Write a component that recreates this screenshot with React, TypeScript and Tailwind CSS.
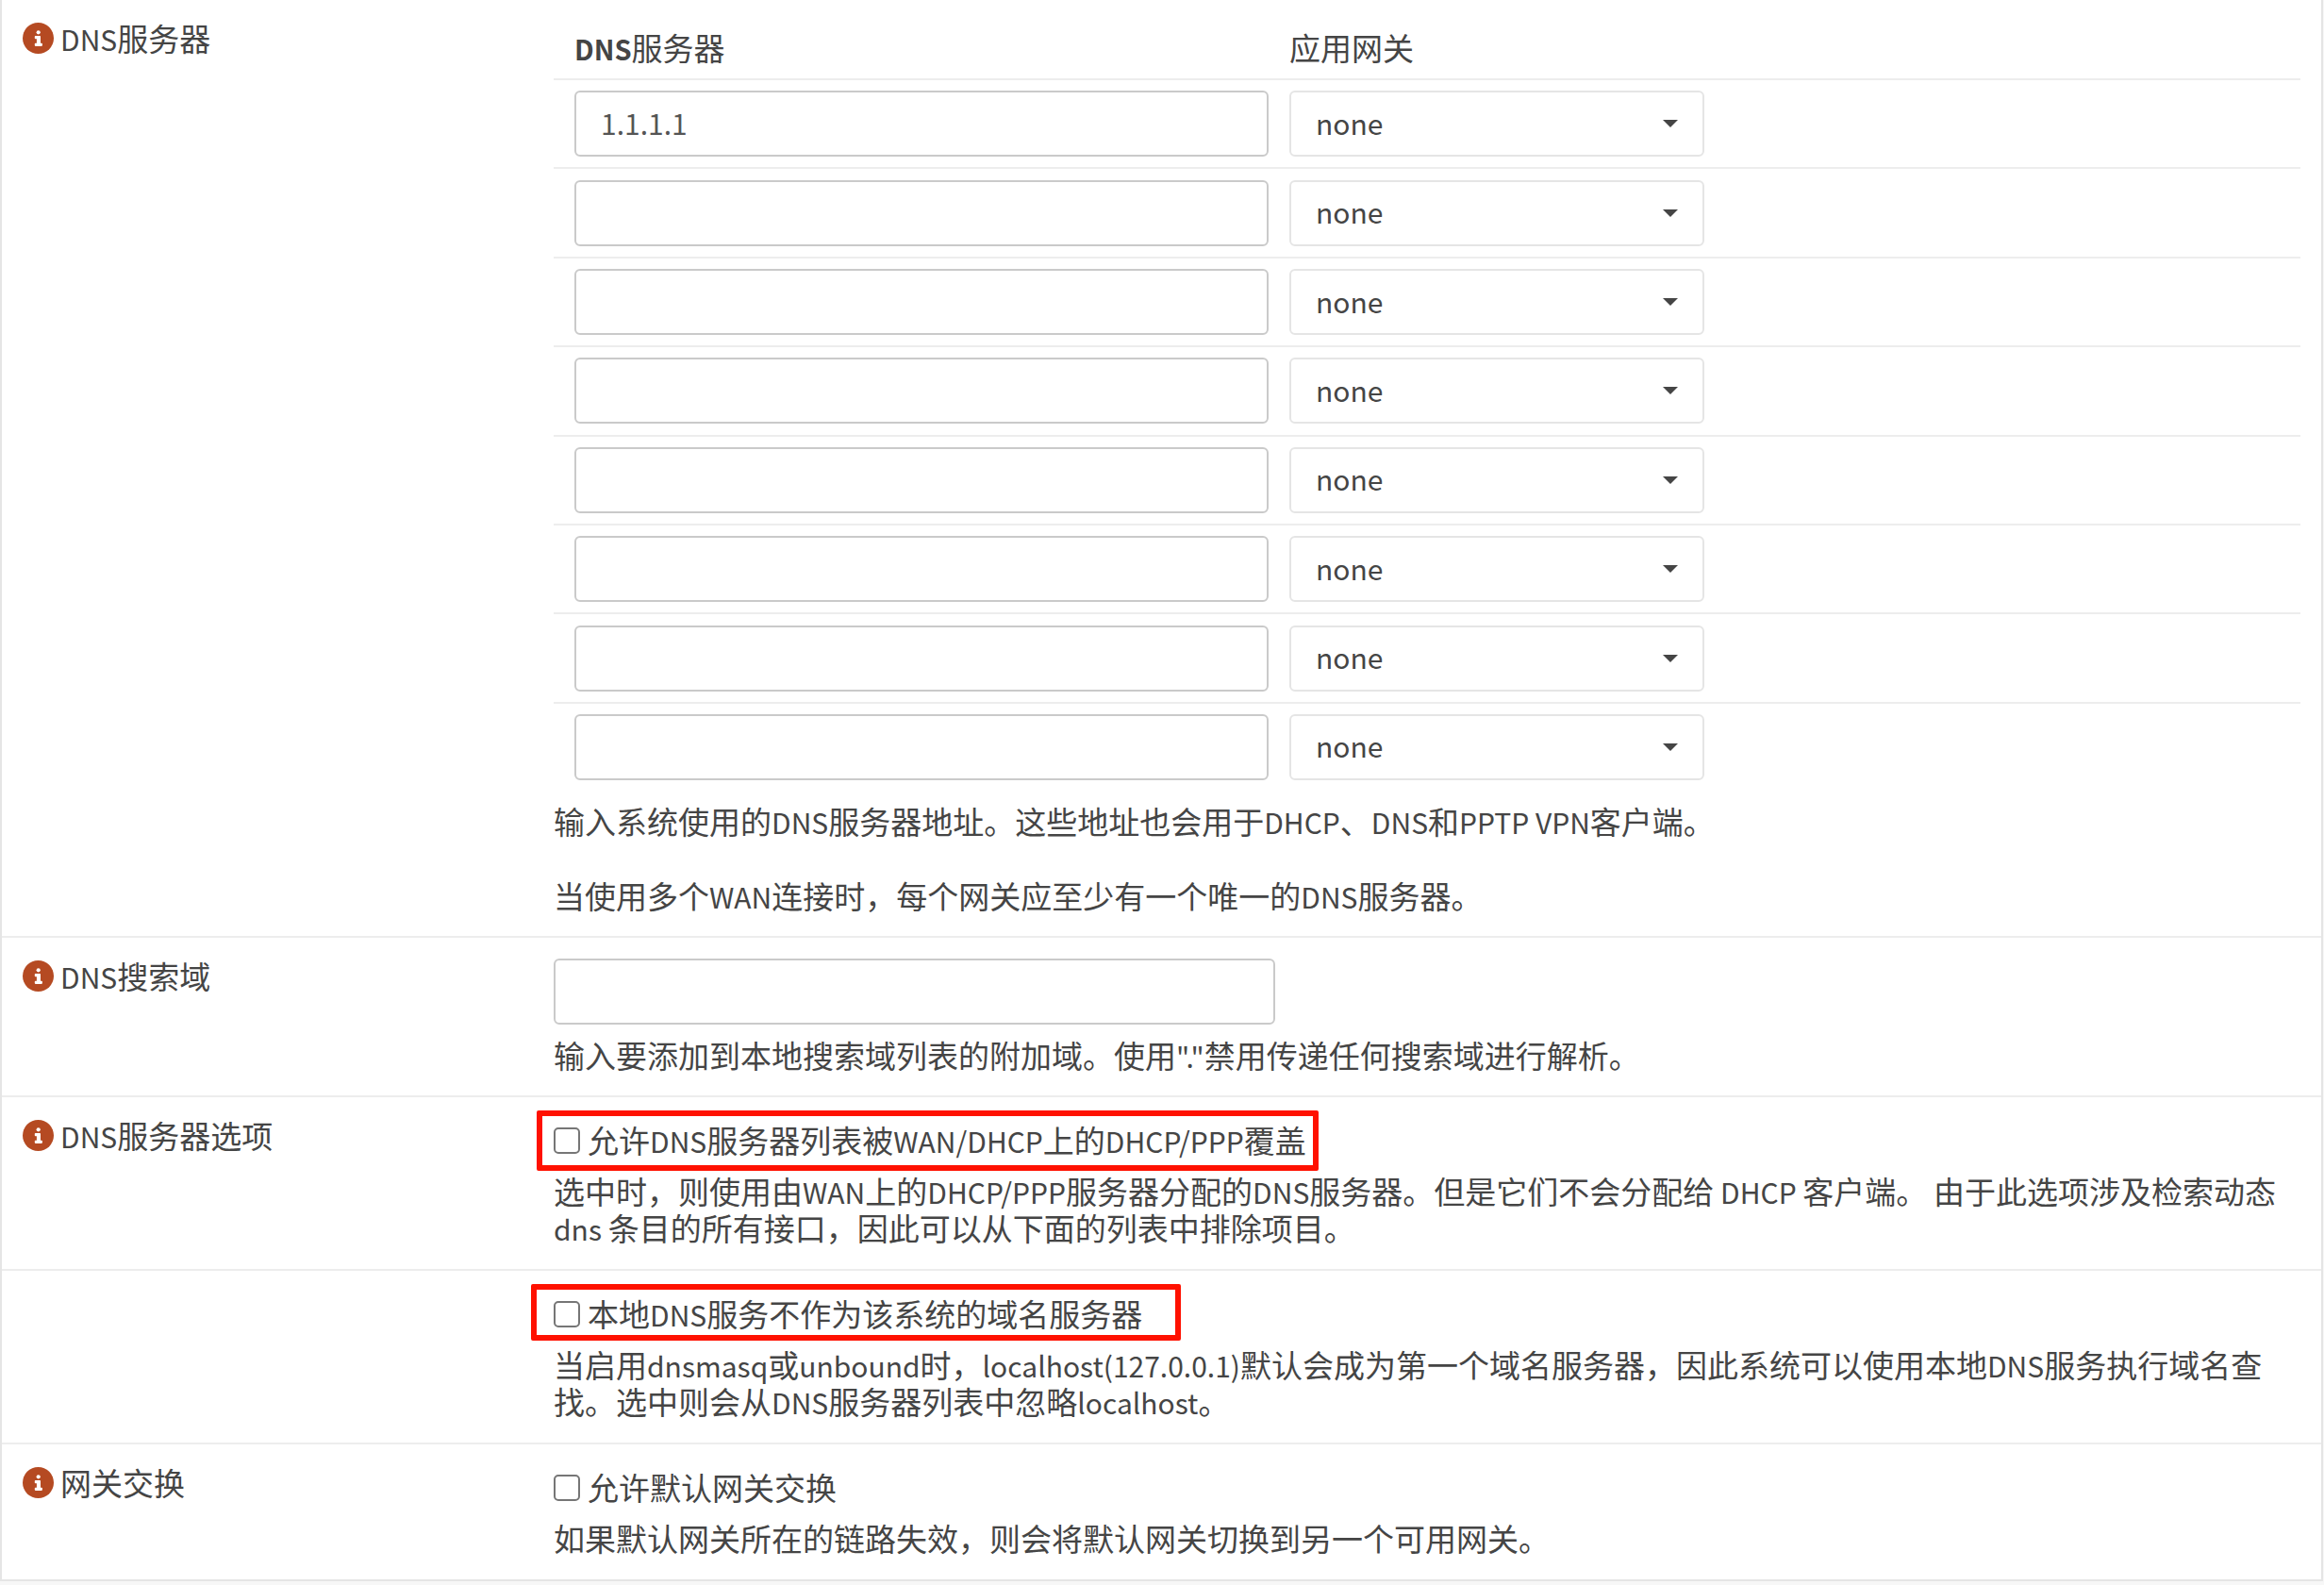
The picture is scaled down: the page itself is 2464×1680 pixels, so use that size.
import { useState, type ReactNode } from 'react';

/* Latin runs are set a little smaller than the Chinese around them. */
function Mixed({ children }: { children: string }) {
  return (
    <>
      {children.split(/([\x20-\x7e]+)/).map((part, i) =>
        i % 2 === 1 ? (
          <span key={i} className="text-[30px] leading-none">
            {part}
          </span>
        ) : (
          part
        ),
      )}
    </>
  );
}

function InfoIcon() {
  return (
    <svg viewBox="0 0 33 33" className="size-[33px] shrink-0" aria-hidden="true">
      <circle cx="16.5" cy="16.5" r="16.5" fill="#b54a22" />
      <circle cx="16.7" cy="10.3" r="2.1" fill="#fff" />
      <path
        d="M13.6 14h4.6c.5 0 .8.3.8.8v7h1.1c.5 0 .8.3.8.8v1.5c0 .5-.3.8-.8.8h-6.5c-.5 0-.8-.3-.8-.8v-1.5c0-.5.3-.8.8-.8h1.3v-4.6h-1.3c-.5 0-.8-.3-.8-.8v-1.6c0-.5.3-.8.8-.8z"
        fill="#fff"
      />
    </svg>
  );
}

function Row({ label, htmlFor, children, last }: { label?: string; htmlFor?: string; children: ReactNode; last?: boolean }) {
  return (
    <section className={`grid grid-cols-[563px_1fr] ${last ? '' : 'border-b-2 border-[#ededed]'}`}>
      <div className="px-[22px] pt-[21px]">
        {label && (
          <div className="flex items-center gap-[7px]">
            <a href="#help" aria-label="帮助">
              <InfoIcon />
            </a>
            <label htmlFor={htmlFor}>
              <Mixed>{label}</Mixed>
            </label>
          </div>
        )}
      </div>
      <div className="px-[22px]">{children}</div>
    </section>
  );
}

function Check({ id, children }: { id: string; children: string }) {
  const [on, setOn] = useState(false);
  return (
    <div className="flex items-center gap-2">
      <input
        id={id}
        type="checkbox"
        checked={on}
        onChange={(e) => setOn(e.target.checked)}
        className="size-7 shrink-0 appearance-none rounded-[5px] border-2 border-[#767676] bg-white checked:bg-[#767676]"
      />
      <label htmlFor={id}>
        <Mixed>{children}</Mixed>
      </label>
    </div>
  );
}

const servers = ['1.1.1.1', '', '', '', '', '', '', ''];

export default function App() {
  return (
    <div className="min-h-screen bg-[#f7f7f7] pr-px font-['Noto_Sans_CJK_SC',sans-serif] text-[33px] leading-[39px] text-[#454545]">
      <main className="border-x-2 border-b-2 border-[#e5e5e5] bg-white">
        <Row label="DNS服务器" htmlFor="dns-0">
          <table className="mt-3 h-[826px] w-full border-collapse text-left">
            <thead>
              <tr className="border-b-2 border-[#ededed]">
                <th className="h-[72px] w-[758px] pt-[6px] pl-[22px] font-normal">
                  <b className="text-[29px] leading-none font-bold">DNS</b>服务器
                </th>
                <th className="pt-[6px] pl-[22px] font-normal">应用网关</th>
              </tr>
            </thead>
            <tbody>
              {servers.map((value, i) => (
                <tr key={i} className="border-b-2 border-[#ededed] last:border-b-0">
                  <td className="pl-[22px]">
                    <input
                      id={`dns-${i}`}
                      type="text"
                      aria-label={`DNS服务器 ${i + 1}`}
                      defaultValue={value}
                      className="block h-[70px] w-full rounded-md border-2 border-[#cacaca] bg-white px-[26px] pb-[2px] text-[30px] text-[#555555]"
                    />
                  </td>
                  <td className="pl-[22px]">
                    <div className="relative w-[440px]">
                      <select
                        aria-label={`应用网关 ${i + 1}`}
                        className="block h-[70px] w-full appearance-none rounded-md border-2 border-[#e5e5e5] bg-white px-[26px] pb-[2px] text-[30px]"
                      >
                        <option>none</option>
                      </select>
                      <svg
                        viewBox="0 0 16 8"
                        className="pointer-events-none absolute top-[31px] right-7 h-2 w-4"
                        aria-hidden="true"
                      >
                        <path d="M0 0h16L8 8z" fill="#454545" />
                      </svg>
                    </div>
                  </td>
                </tr>
              ))}
            </tbody>
          </table>
          <p className="mt-[13px]">
            <Mixed>输入系统使用的DNS服务器地址。这些地址也会用于DHCP、DNS和PPTP VPN客户端。</Mixed>
          </p>
          <p className="mt-10 mb-[23px]">
            <Mixed>当使用多个WAN连接时，每个网关应至少有一个唯一的DNS服务器。</Mixed>
          </p>
        </Row>

        <Row label="DNS搜索域" htmlFor="search">
          <input
            id="search"
            type="text"
            className="mt-[22px] block h-[70px] w-[765px] rounded-md border-2 border-[#cacaca] bg-white px-[26px] text-[30px] text-[#555555]"
          />
          <p className="mt-[13px] mb-[23px]">
            <Mixed>输入要添加到本地搜索域列表的附加域。使用"."禁用传递任何搜索域进行解析。</Mixed>
          </p>
        </Row>

        <Row label="DNS服务器选项" htmlFor="override">
          <div className="relative mt-[26px]">
            <div className="pointer-events-none absolute -top-3 -left-[18px] h-16 w-[829px] rounded-[2px] border-[6px] border-[#ff1100]" />
            <Check id="override">允许DNS服务器列表被WAN/DHCP上的DHCP/PPP覆盖</Check>
          </div>
          <p className="mt-[15px] mb-6">
            <Mixed>
              选中时，则使用由WAN上的DHCP/PPP服务器分配的DNS服务器。但是它们不会分配给 DHCP 客户端。 由于此选项涉及检索动态 dns 条目的所有接口，因此可以从下面的列表中排除项目。
            </Mixed>
          </p>
        </Row>

        <Row>
          <div className="relative mt-[26px]">
            <div className="pointer-events-none absolute -top-3 -left-6 h-[60px] w-[689px] rounded-[2px] border-[6px] border-[#ff1100]" />
            <Check id="local">本地DNS服务不作为该系统的域名服务器</Check>
          </div>
          <p className="mt-[15px] mb-6">
            <Mixed>
              当启用dnsmasq或unbound时，localhost(127.0.0.1)默认会成为第一个域名服务器，因此系统可以使用本地DNS服务执行域名查找。选中则会从DNS服务器列表中忽略localhost。
            </Mixed>
          </p>
        </Row>

        <Row label="网关交换" htmlFor="switching" last>
          <div className="mt-[26px]">
            <Check id="switching">允许默认网关交换</Check>
          </div>
          <p className="mt-[15px] mb-6">如果默认网关所在的链路失效，则会将默认网关切换到另一个可用网关。</p>
        </Row>
      </main>
    </div>
  );
}
